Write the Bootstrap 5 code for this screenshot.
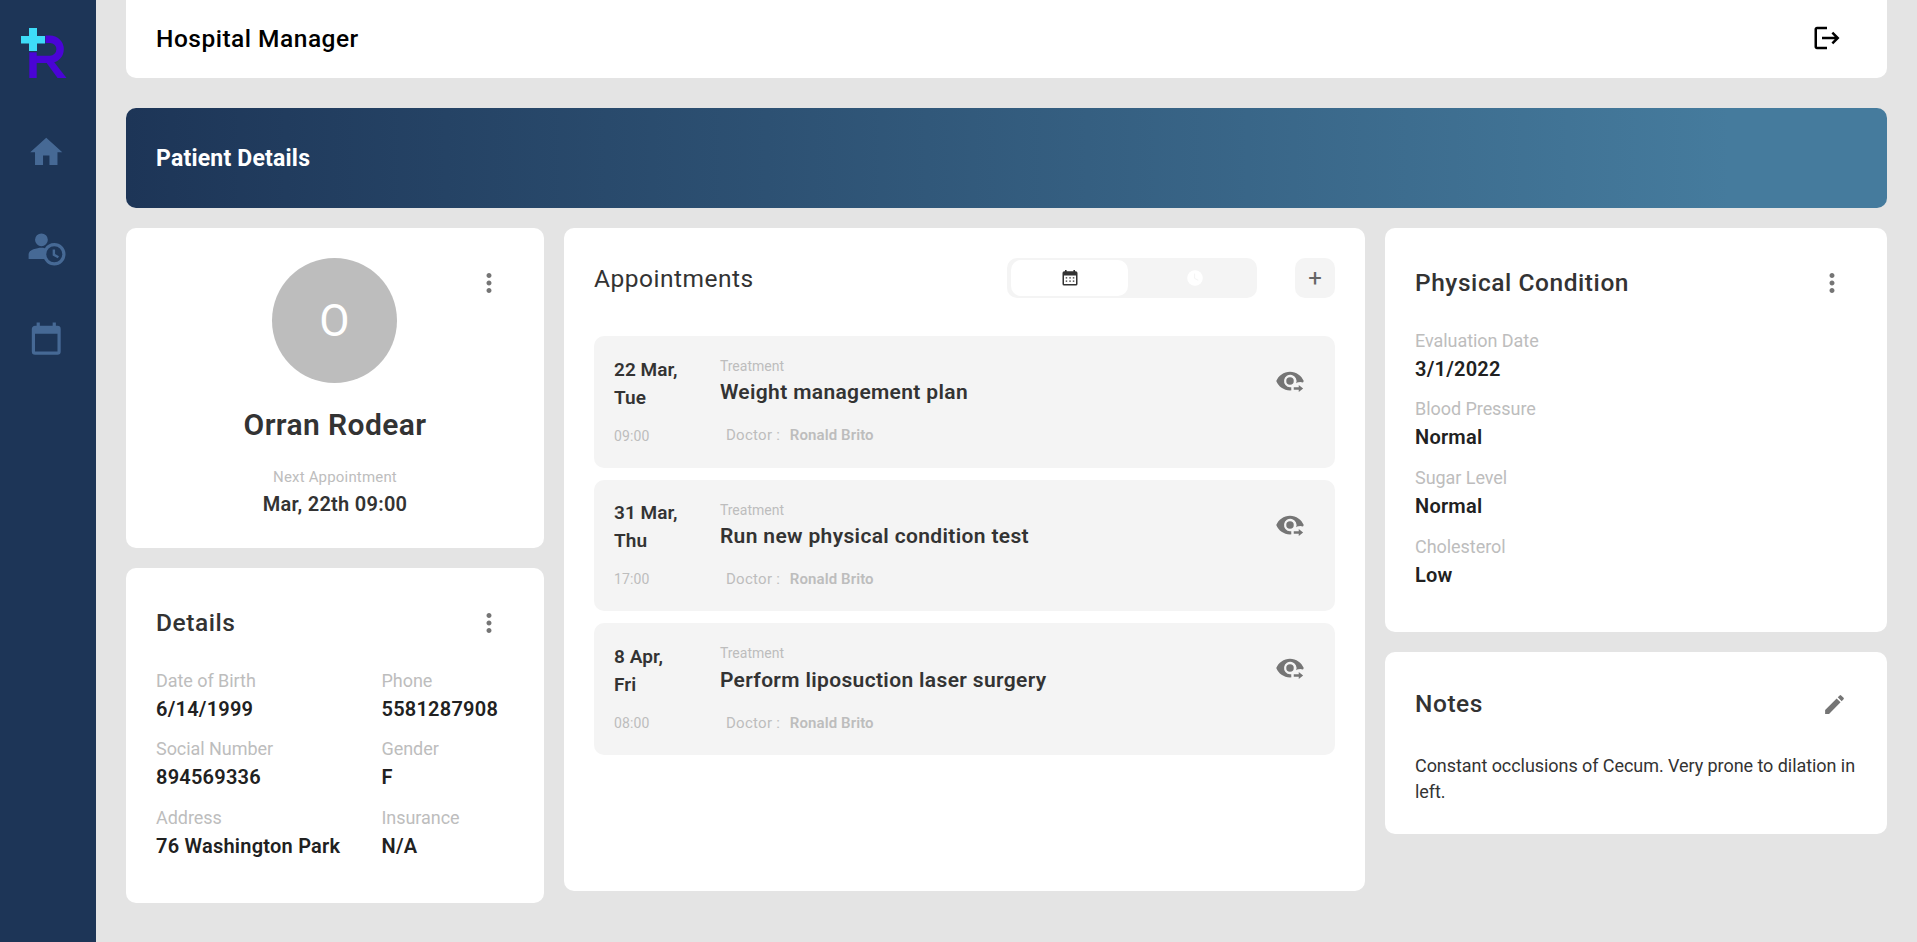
<!DOCTYPE html>
<html lang="en">
<head>
<meta charset="utf-8">
<meta name="viewport" content="width=device-width, initial-scale=1">
<title>Hospital Manager</title>
<link href="https://cdn.jsdelivr.net/npm/bootstrap@5.3.0/dist/css/bootstrap.min.css" rel="stylesheet">
<style>
  body { font-family: Roboto, "Liberation Sans", sans-serif; background: #e4e4e4; color: #333; height: 100vh; overflow: hidden; }
  .side-bar { width: 96px; background: #1d3557; }
  .side-bar a { color: #466995; line-height: 0; width: 39px; margin-left: 27.2px; }
  .side-bar .brand { width: 46px; margin: 28px 0 0 21px; }
  .nav-home { margin-top: 55.2px; }
  .nav-patients { margin-top: 55.8px; }
  .nav-calendar { margin-top: 55px; }
  .content { padding: 0 30px; }
  svg { fill: currentColor; display: block; flex: none; }
  .top-bar { height: 78px; padding: 0 45px 0 30px; border-radius: 0 0 10px 10px; color: #000; }
  .top-bar svg { margin-bottom: 2px; }
  .page-title { font-size: 24.5px; font-weight: 500; letter-spacing: .5px; }
  .banner { height: 100px; margin: 30px 0 20px; padding: 2px 30px 0; border-radius: 10px; background: linear-gradient(90deg, #1d3557 0%, #457b9d 91%); font-size: 23px; font-weight: 700; letter-spacing: .2px; }
  .board { display: grid; grid-template-columns: 418px 801px 1fr; gap: 20px; align-items: start; }
  .stack { display: grid; gap: 20px; }
  .panel { background: #fff; border-radius: 10px; padding: 30px; }
  .panel-head { height: 50px; margin-bottom: 18.5px; padding-right: 10px; font-size: 24.5px; font-weight: 500; letter-spacing: .56px; }
  .tool { color: #757575; line-height: 0; }
  .avatar { width: 125px; height: 125px; background: #bdbdbd; color: #fff; font-size: 44px; margin: 0 0 19px 116px; }
  .card-tool { top: 40px; right: 40px; }
  .patient { height: 320px; }
  .patient-name { font-size: 30px; line-height: 45px; font-weight: 600; letter-spacing: .4px; }
  .next-label { font-size: 15px; line-height: 23px; letter-spacing: .18px; margin-top: 19px; color: #bdbdbd; }
  .next-date { font-size: 20px; line-height: 26px; font-weight: 600; letter-spacing: .27px; margin-top: 2px; }
  .fields { display: grid; row-gap: 12.75px; padding-bottom: 13.25px; }
  .two-up { grid-template-columns: 225.5px 1fr; }
  .fields dt { font-size: 18px; line-height: 28px; font-weight: 400; letter-spacing: -.05px; color: #bdbdbd; }
  .fields dd { font-size: 20px; line-height: 28px; font-weight: 600; letter-spacing: .23px; color: #212121; margin: 0; white-space: nowrap; }
  .schedule { height: 663px; }
  .schedule-head { height: 40px; margin-bottom: 38px; }
  .schedule-head h2 { font-size: 24.5px; font-weight: 450; letter-spacing: .5px; margin: 0; padding-top: 1px; }
  .switch { width: 250px; height: 40px; padding: 2px 4px; background: #f4f4f4; border-radius: 10px; margin-right: 38px; }
  .switch span { width: 117px; border-radius: 10px; }
  .switch .on { background: #fff; color: #333; }
  .switch .off { color: #fff; margin-left: auto; }
  .add { width: 40px; height: 40px; background: #f4f4f4; color: #666; border-radius: 10px; font-size: 24px; padding: 0; border: 0; line-height: 40px; }
  .visit { height: 131.5px; background: #f4f4f4; border-radius: 10px; padding: 19.5px 30px 0 20px; margin-bottom: 12.2px; }
  .visit-when { width: 105.9px; }
  .visit-date { width: 80px; font-size: 19px; line-height: 28px; font-weight: 600; letter-spacing: .05px; }
  .visit-hour { font-size: 14px; line-height: 20px; letter-spacing: .15px; margin-top: 14.2px; color: #bdbdbd; }
  .visit-kind { font-size: 14px; line-height: 20px; color: #bdbdbd; margin-top: .6px; }
  .visit-name { font-size: 21px; line-height: 30px; font-weight: 600; letter-spacing: .35px; margin-top: 1.3px; }
  .visit-doctor { font-size: 15px; line-height: 22px; letter-spacing: .3px; margin: 16.9px 0 0 6px; color: #bdbdbd; }
  .visit-doctor b { font-weight: 600; letter-spacing: .1px; margin-left: 9.5px; }
  .visit .tool { margin-top: 10.5px; }
  .notes { height: 182px; }
  .notes .panel-head { height: 45px; margin-bottom: 25.5px; }
  .notes p { font-size: 18px; line-height: 26px; letter-spacing: -.06px; margin: 0 -5px 0 0; }
</style>
</head>
<body class="d-flex">

<svg class="d-none">
  <symbol id="dots" viewBox="0 0 24 24"><path d="M12 8c1.1 0 2-.9 2-2s-.9-2-2-2-2 .9-2 2 .9 2 2 2zm0 2c-1.1 0-2 .9-2 2s.9 2 2 2 2-.9 2-2-.9-2-2-2zm0 6c-1.1 0-2 .9-2 2s.9 2 2 2 2-.9 2-2-.9-2-2-2z"/></symbol>
  <symbol id="view" viewBox="0 0 24 24"><path d="M12 9a3 3 0 1 0 0 6 3 3 0 0 0 0-6m0-4.5c5 0 9.27 3.11 11 7.5-.17.44-.37.87-.59 1.28A5.9 5.9 0 0 0 19 13c-.9-.1-1.4.3-2.1.8A5 5 0 1 0 12 17c.5 0 .6 0 1-.1V18.6l.1.8L12 19.5C7 19.5 2.73 16.39 1 12 2.73 7.61 7 4.5 12 4.5M19 15.2l3.5 2.8-3.5 2.8V19h-4v-2h4z"/></symbol>
</svg>

<nav class="side-bar d-flex flex-column flex-shrink-0 h-100">
  <a class="brand" href="#" aria-label="Home">
    <svg width="46" height="50" viewBox="21 28 46 50">
      <g fill="none" stroke="#4a04d6" stroke-width="7.4">
        <path d="M45.5 39.2H50a10.1 10.1 0 0 1 0 20.2H33"/>
        <path d="M33 78V52.3"/>
      </g>
      <path fill="#4a04d6" d="M45.2 61 57.6 78H66.5L52.5 60z"/>
      <path fill="#3edcf8" d="M29 28h8v8h8v7.6h-8V51h-8v-7.4h-8V36h8z"/>
    </svg>
  </a>
  <a class="nav-home" href="#" aria-label="Dashboard"><svg width="38.5" height="38.5" viewBox="0 0 24 24"><path d="M10 20v-6h4v6h5v-8h3L12 3 2 12h3v8z"/></svg></a>
  <a class="nav-patients" href="#" aria-label="Patients"><svg width="38.5" height="38.5" viewBox="0 0 24 24"><path d="M16 14h1.5v2.82l2.44 1.41-.75 1.3L16 17.69V14m1-2a5 5 0 0 0-5 5 5 5 0 0 0 5 5 5 5 0 0 0 5-5 5 5 0 0 0-5-5m0-2a7 7 0 0 1 7 7 7 7 0 0 1-7 7c-2.79 0-5.2-1.64-6.33-4H1v-3c0-2.66 5.33-4 8-4 .6 0 1.34.07 2.12.2C12.36 11.28 14.53 10 17 10M9 4a4 4 0 0 1 4 4 4 4 0 0 1-4 4 4 4 0 0 1-4-4 4 4 0 0 1 4-4z"/></svg></a>
  <a class="nav-calendar" href="#" aria-label="Calendar"><svg width="38.5" height="38.5" viewBox="0 0 24 24"><path d="M19 19H5V8h14m-3-7v2H8V1H6v2H5c-1.11 0-2 .89-2 2v14a2 2 0 0 0 2 2h14a2 2 0 0 0 2-2V5a2 2 0 0 0-2-2h-1V1"/></svg></a>
</nav>

<main class="content flex-grow-1">
  <header class="top-bar bg-white d-flex align-items-center justify-content-between">
    <span class="page-title">Hospital Manager</span>
    <svg width="30" height="30" viewBox="0 0 24 24"><path d="m17 7-1.41 1.41L18.17 11H8v2h10.17l-2.58 2.58L17 17l5-5zM4 5h8V3H4c-1.1 0-2 .9-2 2v14c0 1.1.9 2 2 2h8v-2H4V5z"/></svg>
  </header>

  <div class="banner d-flex align-items-center text-white">Patient Details</div>

  <div class="board">
    <div class="stack">
      <section class="panel patient position-relative text-center">
        <div class="avatar rounded-circle d-flex align-items-center justify-content-center">O</div>
        <div class="tool card-tool position-absolute"><svg width="30" height="30"><use href="#dots"/></svg></div>
        <div class="patient-name">Orran Rodear</div>
        <div class="next-label">Next Appointment</div>
        <div class="next-date">Mar, 22th 09:00</div>
      </section>

      <section class="panel">
        <div class="panel-head d-flex align-items-center justify-content-between">Details
          <span class="tool"><svg width="30" height="30"><use href="#dots"/></svg></span>
        </div>
        <dl class="fields two-up m-0">
          <div><dt>Date of Birth</dt><dd>6/14/1999</dd></div>
          <div><dt>Phone</dt><dd>5581287908</dd></div>
          <div><dt>Social Number</dt><dd>894569336</dd></div>
          <div><dt>Gender</dt><dd>F</dd></div>
          <div><dt>Address</dt><dd>76 Washington Park</dd></div>
          <div><dt>Insurance</dt><dd>N/A</dd></div>
        </dl>
      </section>
    </div>

    <section class="panel schedule">
      <div class="schedule-head d-flex align-items-center">
        <h2 class="me-auto">Appointments</h2>
        <div class="switch d-flex">
          <span class="on d-flex align-items-center justify-content-center"><svg width="16" height="16" viewBox="0 0 16 16"><path fill-rule="evenodd" d="M3 0h1.6v1.2h6.8V0H13v1.2h.7A1.8 1.8 0 0 1 15.5 3v11a1.6 1.6 0 0 1-1.6 1.6H2.1A1.6 1.6 0 0 1 .5 14V3a1.8 1.8 0 0 1 1.8-1.8H3zM2 5.4V14h12V5.4zM3.7 7.2h1.5v1.4H3.7zm3.6 0h1.5v1.4H7.3zm3.5 0h1.5v1.4h-1.5zM3.7 10.4h1.5v1.4H3.7zm3.6 0h1.5v1.4H7.3zm3.5 0h1.5v1.4h-1.5z"/></svg></span>
          <span class="off d-flex align-items-center justify-content-center"><svg width="16" height="16" viewBox="0 0 16 16"><circle cx="8" cy="8" r="7.8"/><path d="M7.6 3.6v4.7l3.6 2" fill="none" stroke="#f4f4f4" stroke-width="1"/></svg></span>
        </div>
        <button class="add" type="button">+</button>
      </div>

      <article class="visit d-flex align-items-start">
        <div class="visit-when"><div class="visit-date">22 Mar, Tue</div><div class="visit-hour">09:00</div></div>
        <div class="flex-grow-1"><div class="visit-kind">Treatment</div><div class="visit-name">Weight management plan</div><div class="visit-doctor">Doctor :<b>Ronald Brito</b></div></div>
        <span class="tool"><svg width="30" height="30"><use href="#view"/></svg></span>
      </article>
      <article class="visit d-flex align-items-start">
        <div class="visit-when"><div class="visit-date">31 Mar, Thu</div><div class="visit-hour">17:00</div></div>
        <div class="flex-grow-1"><div class="visit-kind">Treatment</div><div class="visit-name">Run new physical condition test</div><div class="visit-doctor">Doctor :<b>Ronald Brito</b></div></div>
        <span class="tool"><svg width="30" height="30"><use href="#view"/></svg></span>
      </article>
      <article class="visit d-flex align-items-start">
        <div class="visit-when"><div class="visit-date">8 Apr,<br>Fri</div><div class="visit-hour">08:00</div></div>
        <div class="flex-grow-1"><div class="visit-kind">Treatment</div><div class="visit-name">Perform liposuction laser surgery</div><div class="visit-doctor">Doctor :<b>Ronald Brito</b></div></div>
        <span class="tool"><svg width="30" height="30"><use href="#view"/></svg></span>
      </article>
    </section>

    <div class="stack">
      <section class="panel">
        <div class="panel-head d-flex align-items-center justify-content-between">Physical Condition
          <span class="tool"><svg width="30" height="30"><use href="#dots"/></svg></span>
        </div>
        <dl class="fields m-0">
          <div><dt>Evaluation Date</dt><dd>3/1/2022</dd></div>
          <div><dt>Blood Pressure</dt><dd>Normal</dd></div>
          <div><dt>Sugar Level</dt><dd>Normal</dd></div>
          <div><dt>Cholesterol</dt><dd>Low</dd></div>
        </dl>
      </section>
      <section class="panel notes">
        <div class="panel-head d-flex align-items-center justify-content-between">Notes
          <span class="tool"><svg width="25" height="25" viewBox="0 0 24 24"><path d="M3 17.25V21h3.75L17.81 9.94l-3.75-3.75L3 17.25zM20.71 7.04a1 1 0 0 0 0-1.41l-2.34-2.34a1 1 0 0 0-1.41 0l-1.83 1.83 3.75 3.75 1.83-1.83z"/></svg></span>
        </div>
        <p>Constant occlusions of Cecum. Very prone to dilation in left.</p>
      </section>
    </div>
  </div>
</main>

<script src="https://cdn.jsdelivr.net/npm/bootstrap@5.3.0/dist/js/bootstrap.bundle.min.js"></script>
</body>
</html>
